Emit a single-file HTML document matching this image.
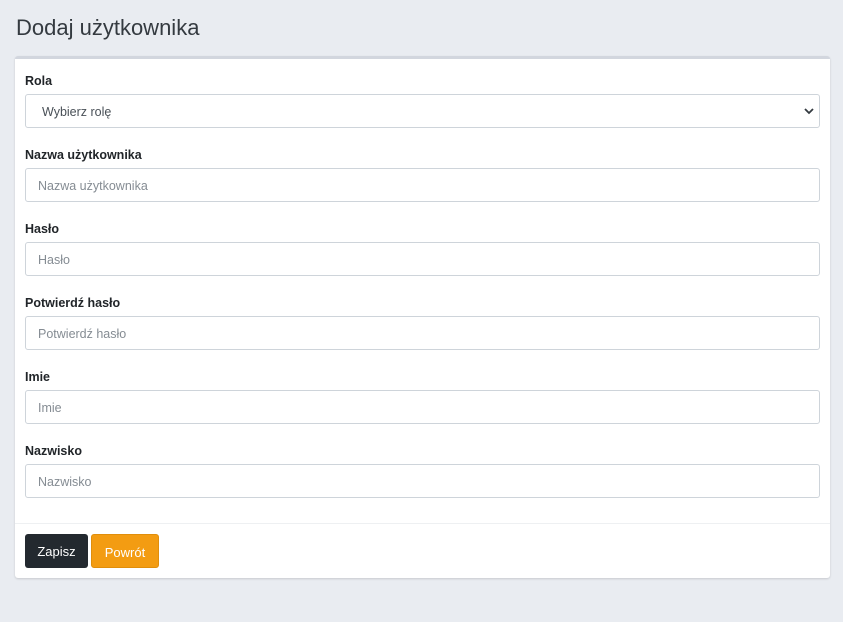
<!DOCTYPE html>
<html><head><meta charset="utf-8"><style>
*{box-sizing:border-box;margin:0;padding:0}
body{width:843px;height:622px;background:#e9ecf1;font-family:"Liberation Sans",sans-serif;color:#212529;position:relative;overflow:hidden}
h1{position:absolute;left:16px;top:15px;font-size:22px;font-weight:400;color:#343a40}
.card{position:absolute;left:15px;top:56px;width:815px;height:522px;background:#fff;border-top:3px solid #d2d6de;border-radius:3px;box-shadow:0 1px 2px rgba(0,0,0,.15)}
.lbl{position:absolute;left:10px;font-size:12.5px;font-weight:bold;color:#212529}
.inp{position:absolute;left:10px;width:795px;height:34px;border:1px solid #ced4da;border-radius:3px;font-size:12.5px;color:#858c93;padding:10px 12px 8px}
.sel{color:#495057;padding-left:16px}
.sel svg{position:absolute;right:5px;top:12px}
.foot{position:absolute;left:0;right:0;top:464px;border-top:1px solid #eef0f2}
.btn{position:absolute;top:475px;height:34px;border-radius:3px;color:#fff;font-size:13px;padding-top:10px;text-align:center}
</style></head><body>
<h1>Dodaj użytkownika</h1>
<div class="card">
<div class="lbl" style="top:15px">Rola</div>
<div class="inp sel" style="top:35px">Wybierz rolę<svg width="10" height="8" viewBox="0 0 10 8"><path d="M1 2l4 4 4-4" stroke="#343a40" stroke-width="1.8" fill="none"/></svg></div>
<div class="lbl" style="top:89px">Nazwa użytkownika</div>
<div class="inp" style="top:109px">Nazwa użytkownika</div>
<div class="lbl" style="top:163px">Hasło</div>
<div class="inp" style="top:183px">Hasło</div>
<div class="lbl" style="top:237px">Potwierdź hasło</div>
<div class="inp" style="top:257px">Potwierdź hasło</div>
<div class="lbl" style="top:311px">Imie</div>
<div class="inp" style="top:331px">Imie</div>
<div class="lbl" style="top:385px">Nazwisko</div>
<div class="inp" style="top:405px">Nazwisko</div>
<div class="foot"></div>
<div class="btn" style="left:10px;width:63px;background:#23292f">Zapisz</div>
<div class="btn" style="left:76px;width:68px;background:#f39c12;border:1px solid #e08e0b">Powrót</div>
</div>
</body></html>
